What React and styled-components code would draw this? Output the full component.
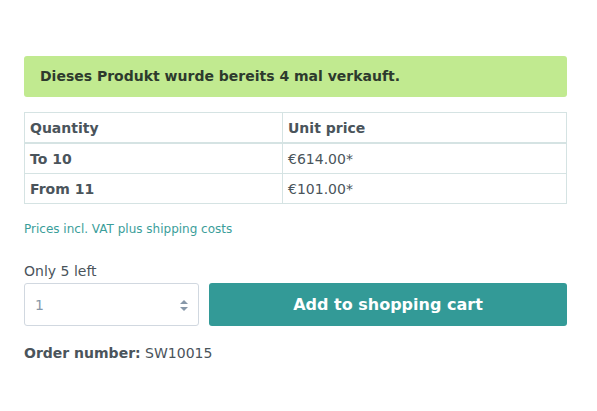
import React from "react";
import styled, { createGlobalStyle } from "styled-components";

const Global = createGlobalStyle`
  body { margin: 0; font-family: "DejaVu Sans", sans-serif; color: #4a545b; background: #fff; }
`;

const Page = styled.div`
  padding: 56px 30px 0 24px;
  display: flex;
  flex-direction: column;
`;

const Alert = styled.div`
  background: #c1ea90;
  border-radius: 3px;
  padding: 12px 16px;
  font-size: 14px;
  font-weight: bold;
  color: #2d3a2d;
  line-height: 17px;
`;

const Table = styled.table`
  margin-top: 15px;
  width: 100%;
  border-collapse: collapse;
  font-size: 14px;
  color: #4a545b;
`;

const Th = styled.th`
  text-align: left;
  font-weight: bold;
  border: 1px solid #d5e3e3;
  border-bottom-width: 2px;
  padding: 6px 5px 6px;
  height: 17px;
  width: ${(p) => p.$w || "auto"};
`;

const Td = styled.td`
  border: 1px solid #d5e3e3;
  padding: 6px 5px;
  height: 17px;
  font-weight: ${(p) => (p.$bold ? "bold" : "normal")};
`;

const Note = styled.div`
  margin-top: 18px;
  font-size: 12px;
  color: #3b9e9a;
`;

const Stock = styled.div`
  margin-top: 27px;
  font-size: 14px;
  line-height: 17px;
`;

const BuyRow = styled.div`
  margin-top: 3px;
  display: flex;
  gap: 10px;
`;

const QtyBox = styled.div`
  position: relative;
  width: 175px;
  height: 43px;
  box-sizing: border-box;
  border: 1px solid #d1d8e0;
  border-radius: 3px;
  display: flex;
  align-items: center;
  padding-left: 10px;
  font-size: 14px;
  color: #8798a9;
`;

const Arrows = styled.svg`
  position: absolute;
  right: 10px;
  top: 16px;
`;

const CartButton = styled.button`
  flex: 1;
  height: 43px;
  border: none;
  border-radius: 3px;
  background: #339a97;
  color: #fff;
  font-family: "DejaVu Sans", sans-serif;
  font-size: 16px;
  font-weight: bold;
`;

const Order = styled.div`
  margin-top: 19px;
  font-size: 14px;
  b { font-weight: bold; }
`;

export default function App() {
  return (
    <>
      <Global />
      <Page>
        <Alert>Dieses Produkt wurde bereits 4 mal verkauft.</Alert>
        <Table>
          <thead>
            <tr>
              <Th $w="247px">Quantity</Th>
              <Th>Unit price</Th>
            </tr>
          </thead>
          <tbody>
            <tr>
              <Td $bold>To 10</Td>
              <Td>€614.00*</Td>
            </tr>
            <tr>
              <Td $bold>From 11</Td>
              <Td>€101.00*</Td>
            </tr>
          </tbody>
        </Table>
        <Note>Prices incl. VAT plus shipping costs</Note>
        <Stock>Only 5 left</Stock>
        <BuyRow>
          <QtyBox>
            1
            <Arrows width="8" height="11" viewBox="0 0 8 11">
              <path d="M4 0 L8 4 H0 Z M0 7 H8 L4 11 Z" fill="#8798a9" />
            </Arrows>
          </QtyBox>
          <CartButton>Add to shopping cart</CartButton>
        </BuyRow>
        <Order>
          <b>Order number:</b> SW10015
        </Order>
      </Page>
    </>
  );
}
